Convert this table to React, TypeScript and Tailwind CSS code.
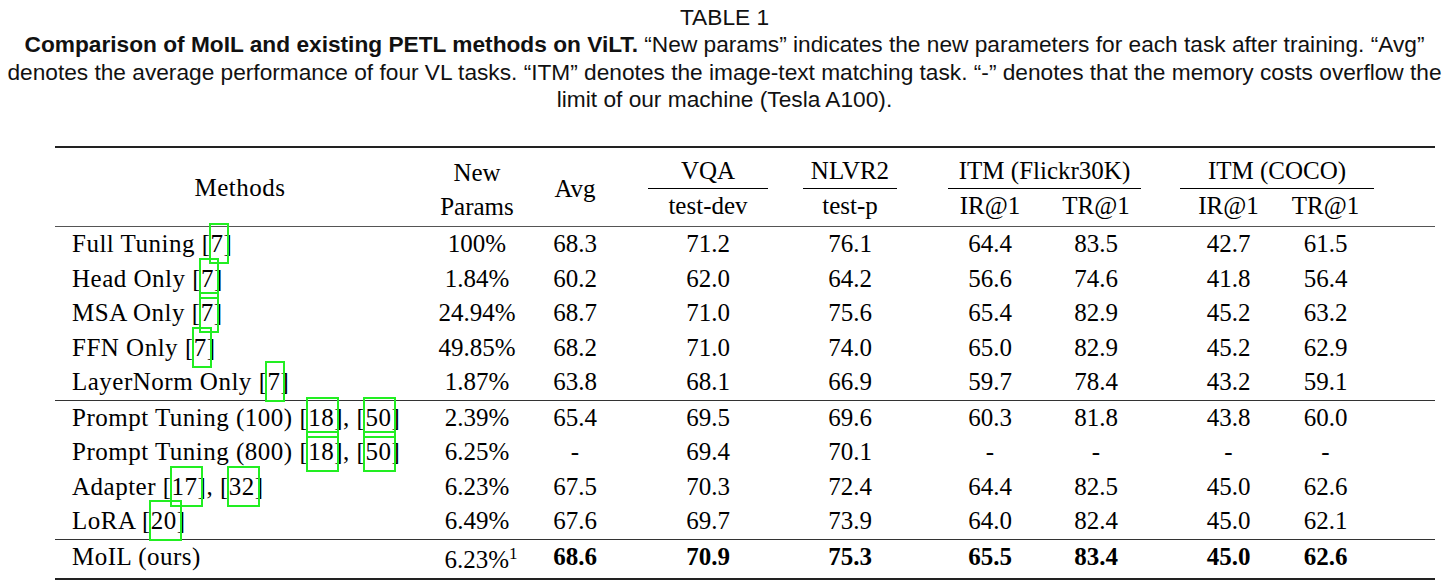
const serif = "font-['Liberation_Serif','Times_New_Roman',serif]";

type Cell = string | { v: string; sup?: string };

const Cite = ({ n }: { n: string }) => (
  <>
    [
    <span className="relative inline-block leading-[24px]">
      {n}
      <span className="absolute -left-[2px] -right-[5px] -top-[9px] -bottom-[8px] border-2 border-[#22ee22]" />
    </span>
    ]
  </>
);

const methodsA: { name: string; refs: string[] }[] = [
  { name: "Full Tuning", refs: ["7"] },
  { name: "Head Only", refs: ["7"] },
  { name: "MSA Only", refs: ["7"] },
  { name: "FFN Only", refs: ["7"] },
  { name: "LayerNorm Only", refs: ["7"] },
];

const methodsB: { name: string; refs: string[] }[] = [
  { name: "Prompt Tuning (100)", refs: ["18", "50"] },
  { name: "Prompt Tuning (800)", refs: ["18", "50"] },
  { name: "Adapter", refs: ["17", "32"] },
  { name: "LoRA", refs: ["20"] },
];

const dataA: string[][] = [
  ["100%", "68.3", "71.2", "76.1", "64.4", "83.5", "42.7", "61.5"],
  ["1.84%", "60.2", "62.0", "64.2", "56.6", "74.6", "41.8", "56.4"],
  ["24.94%", "68.7", "71.0", "75.6", "65.4", "82.9", "45.2", "63.2"],
  ["49.85%", "68.2", "71.0", "74.0", "65.0", "82.9", "45.2", "62.9"],
  ["1.87%", "63.8", "68.1", "66.9", "59.7", "78.4", "43.2", "59.1"],
];

const dataB: string[][] = [
  ["2.39%", "65.4", "69.5", "69.6", "60.3", "81.8", "43.8", "60.0"],
  ["6.25%", "-", "69.4", "70.1", "-", "-", "-", "-"],
  ["6.23%", "67.5", "70.3", "72.4", "64.4", "82.5", "45.0", "62.6"],
  ["6.49%", "67.6", "69.7", "73.9", "64.0", "82.4", "45.0", "62.1"],
];

// widths of the value cells, left to right
const cellCls = [
  "w-[104px]",
  "w-[92px]",
  "w-[174px]",
  "w-[110px]",
  "ml-[32px] w-[106px]",
  "w-[106px]",
  "ml-[31px] w-[97px]",
  "w-[97px]",
];

const Values = ({ vals, bold }: { vals: Cell[]; bold?: boolean }) => (
  <>
    {vals.map((c, i) => (
      <div key={i} className={`${cellCls[i]} flex justify-center whitespace-nowrap ${bold && i > 0 ? "font-bold" : ""}`}>
        {typeof c === "string" ? (
          c
        ) : (
          <span className="pl-[8px]">
            {c.v}
            <span className="text-[17px] align-[9px]">{c.sup}</span>
          </span>
        )}
      </div>
    ))}
  </>
);

const Row = ({ name, refs, vals }: { name: string; refs: string[]; vals: string[] }) => (
  <div className="flex items-center h-[34.5px]">
    <div className="w-[370px] pl-[17px] whitespace-nowrap tracking-[0.5px]">
      {name}{" "}
      {refs.map((r, i) => (
        <span key={r}>
          {i > 0 && ", "}
          <Cite n={r} />
        </span>
      ))}
    </div>
    <Values vals={vals} />
  </div>
);

export default function App() {
  return (
    <div className="w-[1449px] h-[585px] bg-white text-black overflow-hidden">
      <div className="font-['Liberation_Sans',Arial,sans-serif] text-[22.7px] leading-[27.3px] text-center pt-[4px] text-[#111] whitespace-nowrap">
        <div>TABLE 1</div>
        <div>
          <b>Comparison of MoIL and existing PETL methods on ViLT.</b> “New params” indicates the new parameters for each task after
          training. “Avg”
        </div>
        <div>
          denotes the average performance of four VL tasks. “ITM” denotes the image-text matching task. “-” denotes that the memory
          costs overflow the
        </div>
        <div>limit of our machine (Tesla A100).</div>
      </div>

      <div className={`${serif} text-[25px] leading-[34px] ml-[55px] w-[1380px] mt-[33px]`}>
        <div className="h-[2px] bg-[#222]" />
        {/* header */}
        <div className="flex h-[78px]">
          <div className="w-[370px] flex items-center justify-center pt-[2px] tracking-[0.5px]">Methods</div>
          <div className="w-[104px] flex flex-col items-center justify-center pt-[5px] leading-[34px] whitespace-nowrap">
            <span>New</span>
            <span>Params</span>
          </div>
          <div className="w-[92px] flex items-center justify-center pt-[3px]">Avg</div>
          <div className="w-[174px] flex flex-col">
            <div className="h-[43px] flex items-center justify-center pt-[6px]">VQA</div>
            <div className="mx-[27px] h-px bg-black" />
            <div className="flex-1 flex items-center justify-center pb-[3px]">test-dev</div>
          </div>
          <div className="w-[110px] flex flex-col">
            <div className="h-[43px] flex items-center justify-center pt-[6px]">NLVR2</div>
            <div className="mx-[8px] h-px bg-black" />
            <div className="flex-1 flex items-center justify-center pb-[3px]">test-p</div>
          </div>
          <div className="w-[257px] flex flex-col">
            <div className="h-[43px] flex items-center justify-center pt-[6px] pl-[22px] whitespace-nowrap">ITM (Flickr30K)</div>
            <div className="ml-[43px] mr-[21px] h-px bg-black" />
            <div className="flex-1 flex items-center pb-[3px]">
              <div className="ml-[32px] w-[106px] flex justify-center">IR@1</div>
              <div className="w-[106px] flex justify-center">TR@1</div>
            </div>
          </div>
          <div className="w-[233px] flex flex-col">
            <div className="h-[43px] flex items-center justify-center pt-[6px] whitespace-nowrap">
              <span className="ml-[-3px]">ITM (COCO)</span>
            </div>
            <div className="ml-[18px] mr-[21px] h-px bg-black" />
            <div className="flex-1 flex items-center pb-[3px]">
              <div className="ml-[18px] w-[97px] flex justify-center">IR@1</div>
              <div className="w-[97px] flex justify-center">TR@1</div>
            </div>
          </div>
        </div>
        <div className="h-px bg-[#555]" />

        {methodsA.map((m, i) => (
          <Row key={m.name} name={m.name} refs={m.refs} vals={dataA[i]} />
        ))}
        <div className="h-px bg-[#333]" />
        {methodsB.map((m, i) => (
          <Row key={m.name} name={m.name} refs={m.refs} vals={dataB[i]} />
        ))}
        <div className="h-px bg-[#333]" />

        <div className="flex items-center h-[34px] mb-[4px]">
          <div className="w-[370px] pl-[17px] whitespace-nowrap tracking-[0.5px]">MoIL (ours)</div>
          <Values bold vals={[{ v: "6.23%", sup: "1" }, "68.6", "70.9", "75.3", "65.5", "83.4", "45.0", "62.6"]} />
        </div>
        <div className="h-[2px] bg-[#222]" />
      </div>
    </div>
  );
}
